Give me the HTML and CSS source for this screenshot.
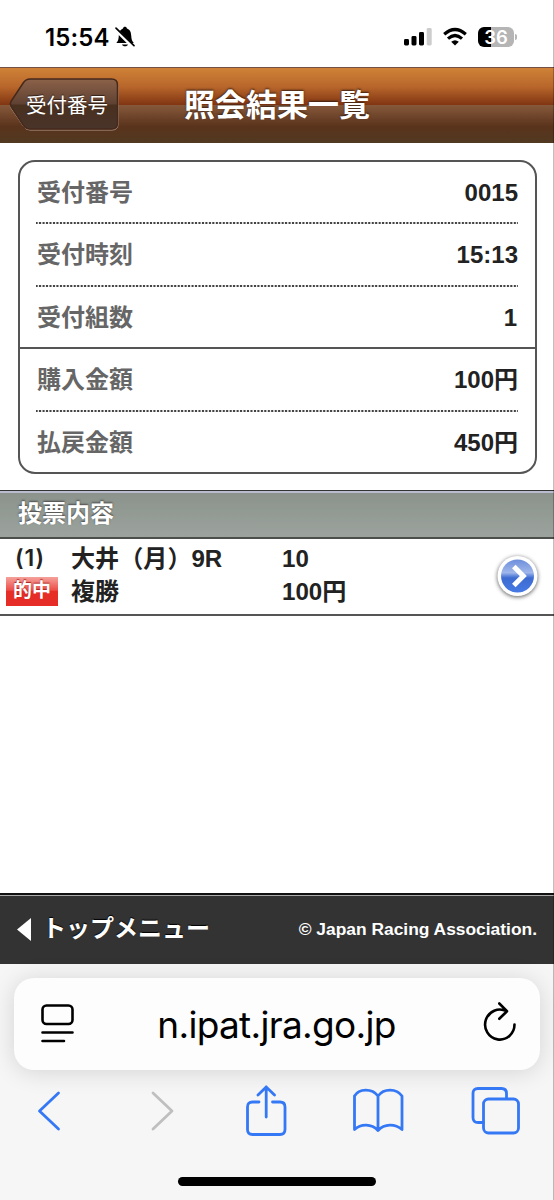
FILE: index.html
```html
<!DOCTYPE html>
<html lang="ja">
<head>
<meta charset="utf-8">
<title>照会結果一覧</title>
<link rel="stylesheet" href="styles.css">
</head>
<body>
<div class="phone">
  <div class="status">
    <div class="clock">15:54
      <svg class="bell" width="20" height="22" viewBox="0 0 20 22"><path d="M1.300 17C3.200 15 3.600 13.200 3.800 9.500C4 5.500 5.600 3.400 8 2.500C8.200.2 11.500.2 12 2.500C14.600 3.400 16 5.500 16.200 9.500C16.400 13.200 17 15 18.800 17Z"/><path d="M7 18.400H13C12.500 20.800 7.500 20.800 7 18.400Z"/><path d="M.2 3L17.900 20.800" stroke="#fff" stroke-width="3.400"/><path d="M1 2.200L19 19.600" stroke="#000" stroke-width="1.700" stroke-linecap="round"/></svg>
    </div>
    <div class="signals">
      <svg width="28" height="18" viewBox="0 0 28 18"><rect x="0" y="11" width="5" height="6.500" rx="1.400"/><rect x="7.500" y="8" width="5" height="9.500" rx="1.400"/><rect x="15" y="4" width="5" height="13.500" rx="1.400"/><rect x="22.700" y="0" width="5" height="17.500" rx="1.400" fill="#ccc"/></svg>
      <svg class="wifi" width="24" height="18" viewBox="0 0 24 18"><g fill="none" stroke="#000" stroke-width="3.200"><path d="M1.200 6.200Q12-3.200 22.800 6.200"/><path d="M5 10.600Q12 4.400 19 10.600"/></g><path d="M8.200 13.800Q12 10.800 15.800 13.800L12 17.600Z"/></svg>
      <span class="battery">36</span><i class="battery-tip"></i>
    </div>
  </div>

  <header class="header">
    <div class="back">
      <svg class="back-shape" width="112" height="56" viewBox="0 0 112 56">
        <defs><linearGradient id="back-fill" x1="0" y1="0" x2="0" y2="1"><stop offset="0" stop-color="#8c6249"/><stop offset=".5" stop-color="#5f4132"/><stop offset=".52" stop-color="#49301f"/><stop offset="1" stop-color="#49342a"/></linearGradient></defs>
        <path d="M21 3.500H103Q109 3.500 109 9.500V47Q109 53 103 53H21Q17 53 14.500 49.500L2 31Q.5 28.500 2 26L14.500 7Q17 3.500 21 3.500Z" fill="none" stroke="#b4978a" stroke-width="1"/>
        <path d="M21 2H102.500Q108.500 2 108.500 8V46Q108.500 52 102.500 52H21Q17 52 14.500 48.500L2 29.500Q.5 27 2 24.500L14.500 5.500Q17 2 21 2Z" fill="url(#back-fill)" stroke="#45291b" stroke-width="1.500"/>
      </svg>
      <span class="back-label">受付番号</span>
    </div>
    <h1 class="title">照会結果一覧</h1>
  </header>

  <main class="main">
    <dl class="summary">
      <div class="item"><dt>受付番号</dt><dd>0015</dd></div>
      <div class="item"><dt>受付時刻</dt><dd>15:13</dd></div>
      <div class="item item-last"><dt>受付組数</dt><dd class="one">1</dd></div>
      <div class="item"><dt>購入金額</dt><dd>100円</dd></div>
      <div class="item item-end"><dt>払戻金額</dt><dd>450円</dd></div>
    </dl>
    <h2 class="section">投票内容</h2>
    <div class="bet">
      <div class="bet-tag"><span class="bet-no">(1)</span><span class="hit">的中</span></div>
      <div class="bet-race"><span>大井（月）9R</span><span>複勝</span></div>
      <div class="bet-pick"><span>10</span><span>100円</span></div>
      <svg class="go" width="48" height="48" viewBox="0 0 48 48">
        <defs><linearGradient id="go-fill" x1="0" y1="0" x2="0" y2="1"><stop offset="0" stop-color="#6c8edb"/><stop offset=".4" stop-color="#a0b7ea"/><stop offset=".5" stop-color="#5f86dc"/><stop offset=".56" stop-color="#3d6bd0"/><stop offset="1" stop-color="#477ae6"/></linearGradient></defs>
        <circle class="go-ring" cx="23.500" cy="23" r="20"/>
        <circle cx="23.500" cy="23" r="16.500" fill="url(#go-fill)"/>
        <path d="M19.800 13.500L29.300 23L19.800 32.500" fill="none" stroke="#fff" stroke-width="5"/>
      </svg>
    </div>
  </main>

  <footer class="footer">
    <div class="top-menu"><svg width="14" height="23" viewBox="0 0 14 23"><path d="M0 11.500L14 0V23Z" fill="#fff"/></svg><span>トップメニュー</span></div>
    <div class="copyright">© Japan Racing Association.</div>
  </footer>

  <div class="browser">
    <div class="address">
      <svg width="34" height="40" viewBox="0 0 34 40" fill="none" stroke="#000" stroke-width="2.600" stroke-linecap="round"><rect x="1.500" y="1.500" width="30" height="18.500" rx="4"/><path d="M1.500 28.500H31.500M1.500 37H23"/></svg>
      <span class="url">n.ipat.jra.go.jp</span>
      <svg width="34" height="40" viewBox="0 0 34 40" fill="none" stroke="#000" stroke-width="2.600" stroke-linecap="round" stroke-linejoin="round"><path d="M31.500 20.500A14.700 15 0 1 1 23.500 7.200M16.300 -.5L24 7.200L16.300 14.800"/></svg>
    </div>
    <nav class="tools">
      <svg width="24" height="42" viewBox="0 0 24 42"><path d="M21.500 3L2.500 21L21.500 39"/></svg>
      <svg class="off" width="24" height="42" viewBox="0 0 24 42"><path d="M3 3L22 21L3 39"/></svg>
      <svg width="42" height="52" viewBox="0 0 42 52"><path d="M14 17H7.500Q2.500 17 2.500 22V44.500Q2.500 49.500 7.500 49.500H35Q40 49.500 40 44.500V22Q40 17 35 17H27.500M21.200 32V2M13 10L21.200 2L29.500 10"/></svg>
      <svg width="52" height="46" viewBox="0 0 52 46"><path d="M26 8C20 0 7 .3 2.500 8V41.500C9 35.500 19.500 35.500 26 42.500C32.500 35.500 43 35.500 50 41.500V8C44.500.3 32 0 26 8ZM26 8V42.500"/></svg>
      <svg width="50" height="50" viewBox="0 0 50 50"><path d="M13.500 36.500H8Q3 36.500 3 31.500V7.500Q3 2.500 8 2.500H31.500Q36.500 2.500 36.500 7.500V12.500"/><rect x="13.500" y="13" width="35" height="34" rx="5"/></svg>
    </nav>
    <div class="home"></div>
  </div>
  <div class="edge"></div>
</div>
</body>
</html>
```

FILE: styles.css
```css
* { box-sizing: border-box; }

body {
  margin: 0;
  background: #fff;
  color: #222;
  font-family: "Liberation Sans", "Noto Sans CJK JP", sans-serif;
  font-weight: 700;
}

svg { display: block; flex: none; overflow: visible; }
h1, h2, dl, dd { margin: 0; }

.phone {
  position: relative;
  display: flex;
  flex-direction: column;
  width: 554px;
  height: 1200px;
  overflow: hidden;
}

.edge {
  position: absolute;
  top: 0;
  right: 0;
  width: 1px;
  height: 1200px;
  background: rgba(0, 0, 0, .25);
}

.status {
  display: flex;
  justify-content: space-between;
  height: 67px;
  padding: 25px 37px 0 45px;
  color: #000;
}

.clock {
  display: flex;
  gap: 6px;
  height: 24px;
  font: 600 24px/25px Inter, sans-serif;
  letter-spacing: .1px;
}

.bell { margin-top: 1px; }

.signals { display: flex; align-items: flex-start; padding-top: 3px; }
.wifi { margin-left: 11px; }

.battery {
  width: 36px;
  height: 20px;
  margin: -1px 0 0 11px;
  border-radius: 6px;
  background: linear-gradient(90deg, #000 36%, #b5b5b5 36%);
  color: #fff;
  font: 600 18.5px/20px Inter, sans-serif;
  text-align: center;
}

.battery-tip {
  width: 2px;
  height: 6px;
  margin: 6px 0 0 1px;
  border-radius: 0 2px 2px 0;
  background: #b5b5b5;
}

.header {
  display: flex;
  height: 76px;
  padding-left: 9px;
  border-top: 1px solid #755044;
  background: linear-gradient(#cf8237 0, #b8662b 25%, #813512 49%, #85583a 50%, #5a331c 78%, #513921 100%);
}

.back { display: grid; width: 112px; height: 56px; margin-top: 9px; }
.back-shape, .back-label { grid-area: 1 / 1; }

.back-label {
  padding: 12px 0 0 17px;
  color: #fff;
  font: 400 20.5px/30px "Noto Sans CJK JP", sans-serif;
  text-shadow: 0 -1px 1px #302018;
}

.title {
  margin: 12px 0 0 63px;
  color: #fff;
  font: 700 31px/46px "Noto Sans CJK JP", sans-serif;
  text-shadow: 0 -1px 2px #382010;
}

.main { height: 750px; padding-top: 17px; }

.summary {
  height: 314px;
  margin: 0 17px 0 18px;
  border: 2px solid #555;
  border-radius: 17px;
}

.item {
  display: flex;
  justify-content: space-between;
  height: 62.4px;
  margin: 0 17px 0 16px;
  padding-top: 13px;
  background: repeating-linear-gradient(90deg, #444 0, #444 1.2px, #eee 2.1px, #eee 2.7px, #444 3.465px) 0 100% / 100% 2px no-repeat;
  font-size: 24px;
  line-height: 36px;
}

.item dt { padding-left: 1px; color: #666; }
.item-last { margin: 0; padding-right: 17px; padding-left: 16px; border-bottom: 2px solid #555; background: none; }
.item-end { background: none; }
.item .one { padding-right: 1px; }

.section {
  height: 49px;
  margin-top: 16px;
  padding: 4px 0 0 18px;
  border-top: 1px solid #333;
  border-bottom: 2px solid #4c4e4c;
  background: linear-gradient(#b9bbce 0 2px, #8b938c 2px, #9ca39e 100%);
  color: #fff;
  font-size: 24px;
  line-height: 38px;
  text-shadow: 0 -1px 2px #444;
}

.bet {
  display: grid;
  grid-template-columns: 65px 211px 212px 48px;
  height: 77px;
  padding: 3px 0 0 6px;
  border-bottom: 2px solid #555;
  font-size: 24.1px;
  line-height: 33px;
}

.bet span { display: block; }
.bet-no { padding-left: 9px; font: 600 23px/33px Inter, sans-serif; letter-spacing: 1px; }

.bet .hit {
  width: 52px;
  height: 29px;
  margin-top: 2px;
  background: linear-gradient(#f5a19b 0, #ec5049 45%, #e62e27 50%, #e52c27 100%);
  color: #fff;
  font-size: 19px;
  line-height: 28px;
  text-align: center;
  text-shadow: 0 -1px 1px #a22;
}

.go { margin-top: 11px; }
.go-ring { fill: #fff; filter: drop-shadow(0 1px 2px rgba(0, 0, 0, .65)); }

.footer {
  display: flex;
  align-items: center;
  justify-content: space-between;
  height: 71px;
  padding: 1px 17px 0 17px;
  background: linear-gradient(#111 0 2px, #aaa 2px 3px, #333 3px);
  color: #fff;
  font-size: 17.4px;
}

.top-menu { display: flex; align-items: center; gap: 11px; font-size: 24px; line-height: 36px; text-shadow: 0 -1px 1px #000; }

.browser {
  display: flex;
  flex-direction: column;
  height: 236px;
  padding: 14px 14px 0;
  background: #f6f6f6;
}

.address {
  display: flex;
  align-items: flex-start;
  justify-content: space-between;
  height: 92px;
  padding: 26px 23px 0 27px;
  border-radius: 20px;
  background: #fdfdfd;
  box-shadow: 0 2px 24px rgba(0, 0, 0, .14);
  color: #000;
}

.url { margin-right: 5px; font: 400 37px/42px Inter, sans-serif; letter-spacing: -.7px; }

.tools {
  display: grid;
  grid-template-columns: 113px 95px 107px 118px 50px;
  align-items: center;
  height: 54px;
  margin-top: 14px;
  padding-left: 23px;
}

.tools svg { fill: none; stroke: #3478f6; stroke-width: 2.8; stroke-linecap: round; stroke-linejoin: round; }
.tools .off { stroke: #bfbfbf; }

.home { width: 198px; height: 9px; margin: 39px auto 0; border-radius: 5px; background: #000; }
```
